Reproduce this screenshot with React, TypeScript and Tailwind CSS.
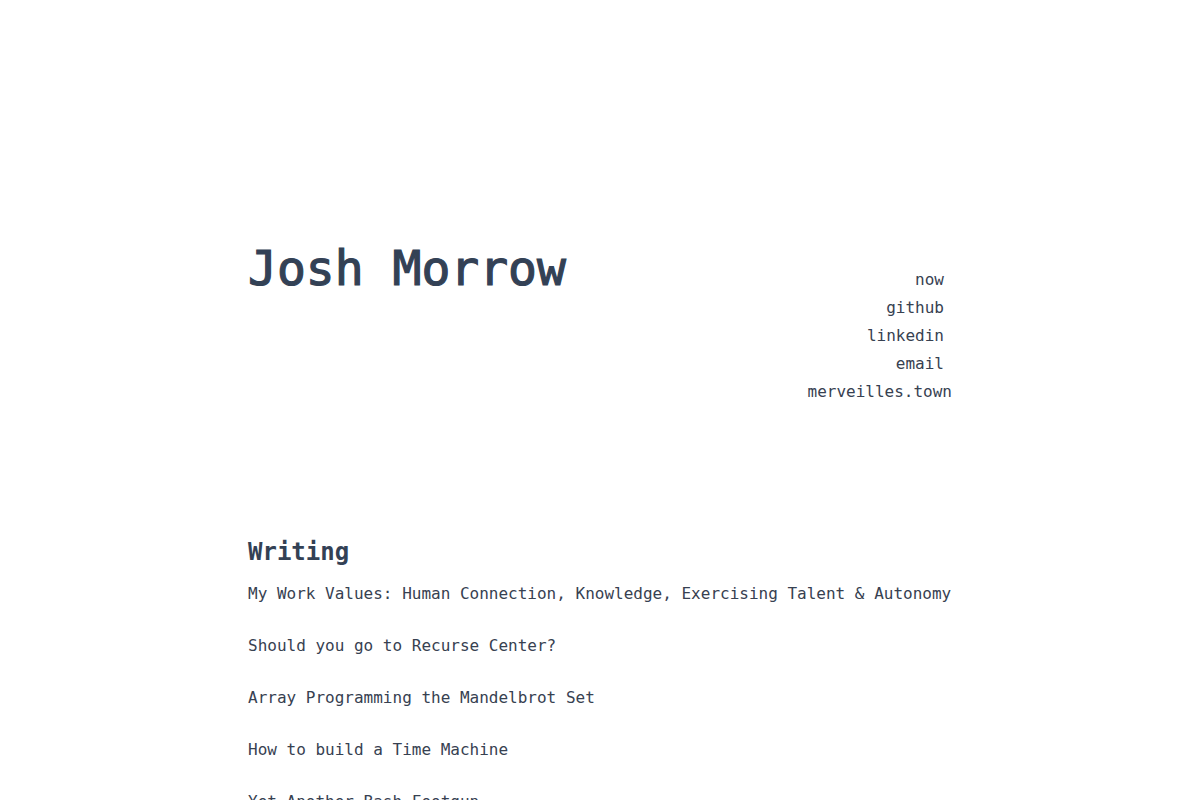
import React from "react";

const links = [
  { label: "now", pad: true },
  { label: "github", pad: true },
  { label: "linkedin", pad: true },
  { label: "email", pad: true },
  { label: "merveilles.town", pad: false },
];

const posts = [
  "My Work Values: Human Connection, Knowledge, Exercising Talent & Autonomy",
  "Should you go to Recurse Center?",
  "Array Programming the Mandelbrot Set",
  "How to build a Time Machine",
  "Yet Another Bash Footgun",
];

const App: React.FC = () => {
  return (
    <div className="min-h-screen bg-white font-['DejaVu_Sans_Mono',monospace] text-[#374151]">
      <div className="max-w-[704px] mx-auto pt-[244px] pb-16">

        <header className="flex justify-between items-start">
          <h1 className="text-[48px] leading-[48px] text-[#334155] [-webkit-text-stroke:1.2px_#334155]">
            Josh Morrow
          </h1>
          <ul className="mt-[22px] text-right text-[16px] leading-[28px]">
            {links.map((l) => (
              <li key={l.label} className={l.pad ? "pr-2" : ""}>
                <a href="#">{l.label}</a>
              </li>
            ))}
          </ul>
        </header>

        <section className="mt-[130px]">
          <h2 className="text-[24px] leading-[32px] font-bold text-[#334155]">
            Writing
          </h2>
          <ul className="mt-[14px] text-[16px] leading-[24px]">
            {posts.map((p) => (
              <li key={p} className="mb-[28px]">
                <a href="#">{p}</a>
              </li>
            ))}
          </ul>
        </section>

      </div>
    </div>
  );
};

export default App;
